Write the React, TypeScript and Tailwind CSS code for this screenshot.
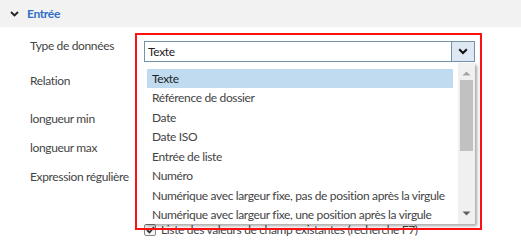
import React from "react";

const items = [
  "Texte",
  "Référence de dossier",
  "Date",
  "Date ISO",
  "Entrée de liste",
  "Numéro",
  "Numérique avec largeur fixe, pas de position après la virgule",
  "Numérique avec largeur fixe, une position après la virgule",
];

export default function App() {
  return (
    <div className="relative w-[521px] h-[247px] overflow-hidden bg-white font-['Lato',sans-serif] text-[12px] tracking-[-0.35px] text-[#444]">
      <div className="h-[27px] bg-[#f2f2f2] flex items-center pl-[10px]">
        <svg width="9" height="6" viewBox="0 0 9 6" className="mt-[1px]">
          <path d="M1 1 L4.5 4.5 L8 1" stroke="#222" strokeWidth="1.8" fill="none" />
        </svg>
        <span className="ml-[8px] font-bold text-[#2f6fc7] text-[12px]">Entrée</span>
      </div>

      <div className="flex flex-col">
        <div className="flex mt-[9px] h-[26px]">
          <div className="w-[144px] pl-[30px] leading-[20px]">Type de données</div>
          <div className="mt-[5px] h-[21px] w-[331px] border border-[#7593a8] flex bg-white">
            <div className="flex-1 pl-[3px] leading-[19px] text-[#222]">Texte</div>
            <div className="w-[23px] border-l border-[#7593a8] bg-[#dde8f4] flex items-center justify-center">
              <svg width="10" height="7" viewBox="0 0 10 7">
                <path d="M1.2 1.2 L5 5 L8.8 1.2" stroke="#111" strokeWidth="2" fill="none" />
              </svg>
            </div>
          </div>
        </div>
        <div className="mt-[9px] pl-[30px] leading-[20px]">Relation</div>
        <div className="mt-[18px] pl-[30px] leading-[20px]">longueur min</div>
        <div className="mt-[9px] pl-[30px] leading-[20px]">longueur max</div>
        <div className="mt-[9px] pl-[30px] leading-[20px]">Expression régulière</div>
        <div className="mt-[33px] pl-[144px] flex items-center gap-[5px] leading-[20px]">
          <div className="w-[12px] h-[12px] border border-[#888] rounded-[2px] flex items-center justify-center bg-[#f4f4f4]">
            <svg width="9" height="8" viewBox="0 0 9 8">
              <path d="M1 4 L3.5 6.5 L8 1" stroke="#333" strokeWidth="1.8" fill="none" />
            </svg>
          </div>
          <span>Liste des valeurs de champ existantes (recherche F7)</span>
        </div>
      </div>

      {/* dropdown list */}
      <div className="absolute left-[144px] top-[63px] w-[331px] h-[161px] bg-white flex shadow-[2px_2px_3px_rgba(0,0,0,0.35)]">
        <div className="flex-1 min-w-0 overflow-hidden pl-[3px] pt-[6px] pr-[5px]">
          {items.map((t, i) => (
            <div
              key={t}
              className={
                "h-[19.43px] leading-[19.43px] pl-[5px] whitespace-nowrap " +
                (i === 0 ? "bg-[#c0dbf0] text-[#222]" : "text-[#444]")
              }
            >
              {t}
            </div>
          ))}
        </div>
        <div className="w-[17px] shrink-0 bg-[#f0f0f0] flex flex-col items-center">
          <svg width="9" height="5" viewBox="0 0 9 5" className="mt-[8px]">
            <path d="M0.5 4.5 L4.5 0.5 L8.5 4.5 Z" fill="#a3a3a3" />
          </svg>
          <div className="mt-[4px] w-[13px] h-[71px] bg-[#c1c1c1]" />
          <div className="flex-1" />
          <svg width="9" height="5" viewBox="0 0 9 5" className="mb-[8px]">
            <path d="M0.5 0.5 L8.5 0.5 L4.5 4.5 Z" fill="#606060" />
          </svg>
        </div>
      </div>

      {/* red highlight box */}
      <div className="absolute left-[135px] top-[33px] w-[347px] h-[197px] border-2 border-[#ff1010] pointer-events-none" />
    </div>
  );
}
